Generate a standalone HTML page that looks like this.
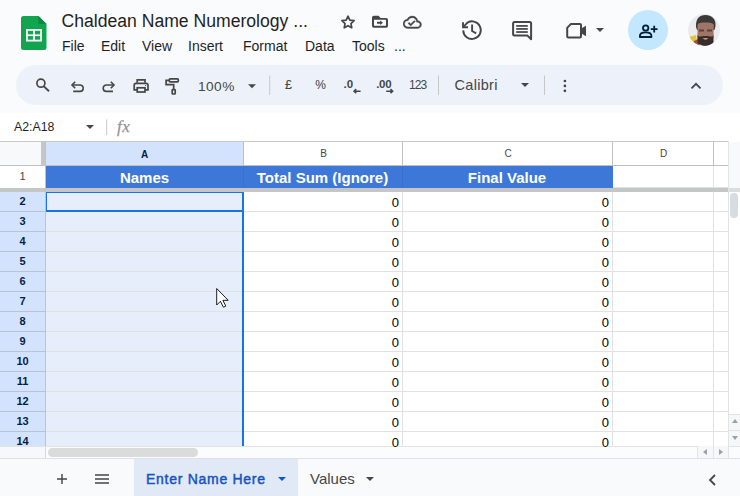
<!DOCTYPE html>
<html><head><meta charset="utf-8">
<style>
*{margin:0;padding:0;box-sizing:border-box}
html,body{width:740px;height:496px;overflow:hidden;background:#f9fbfd;font-family:"Liberation Sans",sans-serif;position:relative}
.a{position:absolute}
.ic{position:absolute;fill:#444746}
.title{left:61.5px;top:11px;font-size:17.6px;color:#1f1f1f;white-space:nowrap}
.menu{top:38px;font-size:14px;color:#1f1f1f;white-space:nowrap}
.pill{left:16px;top:65px;width:707px;height:40px;border-radius:20px;background:#edf2fa}
.sep{position:absolute;width:1px;background:#c7c7c7}
.tb{position:absolute;font-size:14px;color:#444746;white-space:nowrap}
.fbar{left:0;top:113px;width:740px;height:28px;background:#fff}
.grid{left:0;top:141px;width:740px;height:318px;background:#fff;overflow:hidden}
.hl{position:absolute;height:1px;background:#e1e1e1}
.vl{position:absolute;width:1px;background:#e1e1e1}
.ch{position:absolute;font-size:11px;color:#444746;text-align:center}
.rh{position:absolute;left:0;width:45px;font-size:11px;color:#444746;text-align:center;font-weight:bold;background:#d3e3fd}
.num{position:absolute;font-size:13px;color:#000;text-align:right}
</style></head><body>

<!-- logo -->
<svg class="a" style="left:21px;top:16px" width="26" height="34" viewBox="0 0 26 34">
  <path d="M2.5 0H17.5L25.5 8V31.5A2.5 2.5 0 0 1 23 34H2.5A2.5 2.5 0 0 1 0 31.5V2.5A2.5 2.5 0 0 1 2.5 0Z" fill="#12a550"/>
  <path d="M17.5 0L25.5 8L17.5 8Z" fill="#0c8a43"/>
  <rect x="5" y="13" width="16" height="12.5" fill="#fff"/>
  <rect x="6.8" y="14.8" width="5.3" height="3.6" fill="#12a550"/>
  <rect x="13.9" y="14.8" width="5.3" height="3.6" fill="#12a550"/>
  <rect x="6.8" y="20.1" width="5.3" height="3.6" fill="#12a550"/>
  <rect x="13.9" y="20.1" width="5.3" height="3.6" fill="#12a550"/>
</svg>

<div class="a title">Chaldean Name Numerology ...</div>
<div class="a menu" style="left:62px">File</div>
<div class="a menu" style="left:101px">Edit</div>
<div class="a menu" style="left:142px">View</div>
<div class="a menu" style="left:188px">Insert</div>
<div class="a menu" style="left:243px">Format</div>
<div class="a menu" style="left:305px">Data</div>
<div class="a menu" style="left:352px">Tools</div>
<div class="a menu" style="left:394px">...</div>

<!-- star -->
<svg class="a" style="left:0;top:0" width="740" height="40" viewBox="0 0 740 40">
 <path d="M348.00 16.20L349.82 20.09L354.09 20.62L350.95 23.56L351.76 27.78L348.00 25.70L344.24 27.78L345.05 23.56L341.91 20.62L346.18 20.09Z" fill="none" stroke="#444746" stroke-width="1.7" stroke-linejoin="round"/>
 <path d="M373.8 15.8H378.6L380.6 18H386.2A1.8 1.8 0 0 1 388 19.8V25.9A1.8 1.8 0 0 1 386.2 27.7H373.8A1.8 1.8 0 0 1 372 25.9V17.6A1.8 1.8 0 0 1 373.8 15.8Z M374 19.7V25.8H386V19.7Z" fill="#444746" fill-rule="evenodd"/>
 <path d="M377 21.8H380.2V20.6L383 22.8L380.2 25V23.8H377Z" fill="#444746"/>
</svg>
<!-- cloud done -->
<svg class="ic" style="left:403px;top:12.9px" width="18.5" height="18.5" viewBox="0 0 24 24"><path stroke="#444746" stroke-width="0.5" d="M19.35 10.04C18.67 6.59 15.64 4 12 4 9.11 4 6.6 5.64 5.35 8.04 2.34 8.36 0 10.91 0 14c0 3.310 2.69 6 6 6h13c2.76 0 5-2.24 5-5 0-2.64-2.05-4.78-4.650-4.96zM19 18H6c-2.21 0-4-1.79-4-4 0-2.05 1.53-3.76 3.56-3.97l1.07-.11.5-.95C8.08 7.14 9.94 6 12 6c2.62 0 4.880 1.86 5.39 4.43l.3 1.5 1.53.11c1.56.1 2.78 1.41 2.78 2.96 0 1.65-1.35 3-3 3zm-9-3.82l-2.09-2.09L6.5 13.5 10 17l6.01-6.01-1.41-1.41z"/></svg>

<!-- history -->
<svg class="a" style="left:0;top:0" width="740" height="60" viewBox="0 0 740 60">
 <g fill="none" stroke="#444746" stroke-width="1.9">
  <path d="M463.2 30.4A8.8 8.8 0 1 0 466.6 23.2"/>
  <path d="M463 22.2V27.2H468"/>
  <path d="M463.3 26.9L467 23.2"/>
  <path d="M472.1 24.5V31L476.2 33.4"/>
  <!-- comment -->
  <path d="M514.6 22H529.6A1.5 1.5 0 0 1 531.1 23.5V39.2L527.5 35.6H514.6A1.5 1.5 0 0 1 513.1 34.1V23.5A1.5 1.5 0 0 1 514.6 22Z" stroke-width="2" stroke-linejoin="round"/>
  <!-- video -->
  <path d="M571 23.9H580A1 1 0 0 1 581 24.9V36.6A1 1 0 0 1 580 37.6H568.2A1 1 0 0 1 567.2 36.6V27.9Z" stroke-width="2" stroke-linejoin="round"/>
 </g>
 <g fill="#444746">
  <rect x="516.2" y="25.05" width="11.6" height="1.75"/>
  <rect x="516.2" y="28.05" width="11.6" height="1.75"/>
  <rect x="516.2" y="31.15" width="11.6" height="1.75"/>
  <path d="M581.5 28.3L586 25.8V36.3L581.5 33.5Z"/>
  <path d="M596 28h8L600 32z"/>
 </g>
</svg>
<!-- share -->
<div class="a" style="left:627.5px;top:10px;width:40px;height:40px;border-radius:20px;background:#c2e7ff"></div>
<svg class="a" style="left:0;top:0" width="740" height="60" viewBox="0 0 740 60">
 <g fill="none" stroke="#001d35" stroke-width="1.8">
  <circle cx="645.7" cy="28" r="2.7"/>
  <path d="M639.9 37V35.8C639.9 33.6 642.5 32.3 645.7 32.3S651.4 33.6 651.4 35.8V37Z" stroke-linejoin="round"/>
  <path d="M650.8 29.2H657.5M654.2 25.8V32.6"/>
 </g>
</svg>
<!-- avatar -->
<svg class="a" style="left:688px;top:14px" width="32" height="32" viewBox="0 0 32 32">
 <defs><clipPath id="av"><circle cx="16" cy="16" r="16"/></clipPath></defs>
 <g clip-path="url(#av)">
  <rect width="32" height="32" fill="#ebebed"/>
  <path d="M1 23L8 21L9 28L2 29Z" fill="#e3c437"/>
  <path d="M6 27L10 25L12 33H5Z" fill="#a8503f"/>
  <path d="M8 13C7.5 5 11 1 17.5 1S28 5 27.5 12L26.5 16H9Z" fill="#3b3a39"/>
  <path d="M9.5 11C10 9 13 8.5 17.5 8.5S25 9 25.8 11L25.5 22C25 28 22 32 17.5 32S10 28 9.5 22Z" fill="#9e7566"/>
  <path d="M11 15.5H16V17.5H11ZM19 15.5H24V17.5H19Z" fill="#5a4038"/>
  <path d="M9.5 20C10 24 12 22 17.5 22S25 24 25.5 20L25.5 28C24 33 11 33 9.5 28Z" fill="#382d29"/>
  <path d="M14.5 24.5Q17.5 23.5 20.5 24.5Q17.5 26.8 14.5 24.5Z" fill="#cfa596"/>
 </g>
</svg>
<!-- toolbar -->
<div class="a pill"></div>
<svg class="a" style="left:0;top:0" width="740" height="120" viewBox="0 0 740 120">
 <g fill="none" stroke="#444746" stroke-width="1.7">
  <!-- search -->
  <circle cx="40.9" cy="83.2" r="4"/>
  <path d="M43.9 86.4L49 91.3" stroke-width="1.9"/>
  <!-- undo -->
  <g stroke-width="1.6">
  <path d="M72.3 85H80A3.2 3.2 0 0 1 80 91.4H73.2"/>
  <path d="M75.2 81.8L72 85L75.2 88.2"/>
  <!-- redo -->
  <path d="M113.7 85H106.4A3.2 3.2 0 0 0 106.4 91.4H113"/>
  <path d="M110.8 81.8L114 85L110.8 88.2"/>
  </g>
  <!-- print -->
  <path d="M137.2 82.8V79.9H145V82.8"/>
  <path d="M137.2 89.9H134.2V85.2A1.8 1.8 0 0 1 136 83.4H146.2A1.8 1.8 0 0 1 148 85.2V89.9H145"/>
  <rect x="137.2" y="87.8" width="7.8" height="4.2"/>
  <!-- paint format -->
  <rect x="169.3" y="78.9" width="9" height="3" rx="0.8"/>
  <path d="M169.3 80.4H166.1V84.6H173.7V89.5"/>
  <rect x="172.2" y="89.7" width="3" height="4.3" rx="0.6"/>
 </g>
 <circle cx="145.6" cy="85.6" r="0.6" fill="#444746"/>
 <!-- zoom arrow -->
 <path d="M248 84.2h8L252 88.2z" fill="#444746"/>
 <rect x="269.2" y="75.5" width="1" height="19.5" fill="#c7c7c7"/>
 <text x="285" y="89" font-family="Liberation Sans" font-size="12.5" fill="#444746" stroke="#444746" stroke-width="0.1">&#163;</text>
 <text x="315.3" y="89" font-family="Liberation Sans" font-size="12" fill="#444746" stroke="#444746" stroke-width="0.05">%</text>
 <text x="343.6" y="87.5" font-family="Liberation Sans" font-size="11.5" fill="#444746" font-weight="bold">.0</text>
 <text x="376.2" y="87.5" font-family="Liberation Sans" font-size="11.5" fill="#444746" font-weight="bold" letter-spacing="-0.3">.00</text>
 <g fill="none" stroke="#444746" stroke-width="1.6">
  <path d="M354 91.2H360.6M356.2 89.2L354.1 91.2L356.2 93.2"/>
  <path d="M386.2 91.2H392.6M390.5 89.2L392.6 91.2L390.5 93.2"/>
 </g>
 <text x="409" y="89" font-family="Liberation Sans" font-size="12" fill="#444746" letter-spacing="-0.9">123</text>
 <rect x="438" y="75.5" width="1" height="19.5" fill="#c7c7c7"/>
 <path d="M521 83h8L525 87z" fill="#444746"/>
 <rect x="544" y="75.5" width="1" height="19.5" fill="#c7c7c7"/>
 <circle cx="564.9" cy="81" r="1.35" fill="#444746"/>
 <circle cx="564.9" cy="85.9" r="1.35" fill="#444746"/>
 <circle cx="564.9" cy="90.8" r="1.35" fill="#444746"/>
 <path d="M691.5 88.3L696 83.8L700.5 88.3" fill="none" stroke="#444746" stroke-width="1.8"/>
</svg>
<div class="a tb" style="left:198px;top:78.5px;font-size:13.7px;line-height:16px;letter-spacing:0.45px">100%</div>
<div class="a tb" style="left:454.5px;top:77px;font-size:14.5px;line-height:16px;letter-spacing:0.3px">Calibri</div>

<!-- formula bar -->
<div class="a fbar"></div>
<div class="a" style="left:14px;top:119px;font-size:12.3px;line-height:16px;color:#1f1f1f;white-space:nowrap">A2:A18</div>
<svg class="a" style="left:0;top:110px" width="140" height="31" viewBox="0 110 140 31">
 <path d="M86 124.9h8L90 129z" fill="#444746"/>
 <rect x="106.2" y="119.5" width="1" height="15.5" fill="#c7c7c7"/>
 <text x="117" y="132" font-family="Liberation Serif" font-style="italic" font-size="17" fill="#8f9397" stroke="#8f9397" stroke-width="0.25" letter-spacing="0.6">fx</text>
</svg>

<!--GRID-->
<div class="a" style="left:0px;top:141px;width:728px;height:305px;background:#fff;"></div>
<div class="a" style="left:0px;top:141px;width:41px;height:24px;background:#f8f9fa;"></div>
<div class="a" style="left:41px;top:141px;width:5px;height:25px;background:#c4c7c5;"></div>
<div class="a" style="left:46px;top:142px;width:197px;height:23px;background:#d3e3fd;"></div>
<div class="a" style="left:0px;top:141px;width:740px;height:1px;background:#c7c7c7;"></div>
<div class="a" style="left:0px;top:165px;width:728px;height:1px;background:#c0c0c0;"></div>
<div class="a" style="left:46px;top:166px;width:567px;height:22px;background:#3d78d8;"></div>
<div class="a" style="left:243px;top:166px;width:1px;height:22px;background:#3a6fcc;"></div>
<div class="a" style="left:402px;top:166px;width:1px;height:22px;background:#3a6fcc;"></div>
<div class="a" style="left:0px;top:188px;width:740px;height:4px;background:#c4c7c5;"></div>
<div class="a" style="left:0px;top:192px;width:45px;height:254px;background:#d3e3fd;"></div>
<div class="a" style="left:46px;top:192px;width:197px;height:254px;background:#e6eefb;"></div>
<div class="a" style="left:45px;top:141px;width:1px;height:305px;background:#bfc3c8;"></div>
<div class="a" style="left:0px;top:211px;width:45px;height:1px;background:#b9c3d3;"></div>
<div class="a" style="left:46px;top:211px;width:682px;height:1px;background:#e1e1e1;"></div>
<div class="a" style="left:0px;top:231px;width:45px;height:1px;background:#b9c3d3;"></div>
<div class="a" style="left:46px;top:231px;width:682px;height:1px;background:#e1e1e1;"></div>
<div class="a" style="left:0px;top:251px;width:45px;height:1px;background:#b9c3d3;"></div>
<div class="a" style="left:46px;top:251px;width:682px;height:1px;background:#e1e1e1;"></div>
<div class="a" style="left:0px;top:271px;width:45px;height:1px;background:#b9c3d3;"></div>
<div class="a" style="left:46px;top:271px;width:682px;height:1px;background:#e1e1e1;"></div>
<div class="a" style="left:0px;top:291px;width:45px;height:1px;background:#b9c3d3;"></div>
<div class="a" style="left:46px;top:291px;width:682px;height:1px;background:#e1e1e1;"></div>
<div class="a" style="left:0px;top:311px;width:45px;height:1px;background:#b9c3d3;"></div>
<div class="a" style="left:46px;top:311px;width:682px;height:1px;background:#e1e1e1;"></div>
<div class="a" style="left:0px;top:331px;width:45px;height:1px;background:#b9c3d3;"></div>
<div class="a" style="left:46px;top:331px;width:682px;height:1px;background:#e1e1e1;"></div>
<div class="a" style="left:0px;top:351px;width:45px;height:1px;background:#b9c3d3;"></div>
<div class="a" style="left:46px;top:351px;width:682px;height:1px;background:#e1e1e1;"></div>
<div class="a" style="left:0px;top:371px;width:45px;height:1px;background:#b9c3d3;"></div>
<div class="a" style="left:46px;top:371px;width:682px;height:1px;background:#e1e1e1;"></div>
<div class="a" style="left:0px;top:391px;width:45px;height:1px;background:#b9c3d3;"></div>
<div class="a" style="left:46px;top:391px;width:682px;height:1px;background:#e1e1e1;"></div>
<div class="a" style="left:0px;top:411px;width:45px;height:1px;background:#b9c3d3;"></div>
<div class="a" style="left:46px;top:411px;width:682px;height:1px;background:#e1e1e1;"></div>
<div class="a" style="left:0px;top:431px;width:45px;height:1px;background:#b9c3d3;"></div>
<div class="a" style="left:46px;top:431px;width:682px;height:1px;background:#e1e1e1;"></div>
<div class="a" style="left:0px;top:451px;width:45px;height:1px;background:#b9c3d3;"></div>
<div class="a" style="left:46px;top:451px;width:682px;height:1px;background:#e1e1e1;"></div>
<div class="a" style="left:243px;top:142px;width:1px;height:23px;background:#c0c0c0;"></div>
<div class="a" style="left:243px;top:192px;width:1px;height:254px;background:#e1e1e1;"></div>
<div class="a" style="left:402px;top:142px;width:1px;height:23px;background:#c0c0c0;"></div>
<div class="a" style="left:402px;top:192px;width:1px;height:254px;background:#e1e1e1;"></div>
<div class="a" style="left:612px;top:142px;width:1px;height:23px;background:#c0c0c0;"></div>
<div class="a" style="left:612px;top:192px;width:1px;height:254px;background:#e1e1e1;"></div>
<div class="a" style="left:713px;top:142px;width:1px;height:23px;background:#c0c0c0;"></div>
<div class="a" style="left:713px;top:166px;width:1px;height:22px;background:#e1e1e1;"></div>
<div class="a" style="left:713px;top:192px;width:1px;height:254px;background:#e1e1e1;"></div>
<div class="a" style="left:613px;top:187px;width:115px;height:1px;background:#e1e1e1;"></div>
<div class="a" style="left:728px;top:141px;width:12px;height:305px;background:#fff;"></div>
<div class="a" style="left:728px;top:142px;width:12px;height:46px;background:#f8f9fc;"></div>
<div class="a" style="left:728px;top:188px;width:12px;height:4px;background:#dcdcdc;"></div>
<div class="a" style="left:728px;top:141px;width:1px;height:318px;background:#e3e3e3;"></div>
<div class="a" style="left:730px;top:193px;width:8px;height:25px;background:#d7dbe2;border-radius:4px"></div>
<div class="a" style="left:729px;top:414px;width:11px;height:32px;background:#f6f7f8;"></div>
<div class="a" style="left:729px;top:414px;width:11px;height:1px;background:#e3e3e3;"></div>
<div class="a" style="left:729px;top:430px;width:11px;height:1px;background:#e3e3e3;"></div>
<svg class="a" style="left:732px;top:419px" width="6" height="4" viewBox="0 0 6 4"><path d="M0 4L3 0L6 4z" fill="#9aa0a6"/></svg>
<svg class="a" style="left:732px;top:436px" width="6" height="4" viewBox="0 0 6 4"><path d="M0 0L3 4L6 0z" fill="#9aa0a6"/></svg>
<div class="a" style="left:0px;top:446px;width:740px;height:13px;background:#fbfcfd;"></div>
<div class="a" style="left:0px;top:446px;width:45px;height:13px;background:#f6f8fc;"></div>
<div class="a" style="left:45px;top:446px;width:1px;height:13px;background:#d8d8d8;"></div>
<div class="a" style="left:0px;top:446px;width:740px;height:1px;background:#e3e3e3;"></div>
<div class="a" style="left:0px;top:458px;width:740px;height:1px;background:#dfe1e5;"></div>
<div class="a" style="left:48px;top:448px;width:150px;height:9px;background:#dadcdb;border-radius:4.5px"></div>
<div class="a" style="left:697px;top:446px;width:31px;height:12px;background:#f6f7f8;"></div>
<div class="a" style="left:697px;top:446px;width:1px;height:12px;background:#e3e3e3;"></div>
<div class="a" style="left:713px;top:446px;width:1px;height:12px;background:#e3e3e3;"></div>
<div class="a" style="left:728px;top:446px;width:1px;height:12px;background:#e3e3e3;"></div>
<svg class="a" style="left:703px;top:449px" width="4" height="6" viewBox="0 0 4 6"><path d="M4 0L0 3L4 6z" fill="#9aa0a6"/></svg>
<svg class="a" style="left:719px;top:449px" width="4" height="6" viewBox="0 0 4 6"><path d="M0 0L4 3L0 6z" fill="#9aa0a6"/></svg>
<div class="a" style="left:0px;top:459px;width:740px;height:37px;background:#f9fafc;"></div>
<div class="a" style="left:134px;top:459px;width:164px;height:37px;background:#e1e9f7;"></div>
<svg class="a" style="left:56px;top:473px" width="12" height="12" viewBox="0 0 12 12"><path d="M6 1v10M1 6h10" stroke="#444746" stroke-width="1.45" fill="none"/></svg>
<svg class="a" style="left:94px;top:473px" width="16" height="12" viewBox="0 0 16 12"><path d="M1 2h14M1 6h14M1 10h14" stroke="#444746" stroke-width="1.45" fill="none"/></svg>
<div class="a" style="left:146px;top:469px;width:140px;height:20px;font-size:14px;letter-spacing:0.72px;color:#1553c4;-webkit-text-stroke:0.45px #1553c4;line-height:20px;white-space:nowrap">Enter Name Here</div>
<svg class="a" style="left:278px;top:477px" width="8" height="4" viewBox="0 0 8 4"><path d="M0 0h8L4 4z" fill="#0b57d0"/></svg>
<div class="a" style="left:310px;top:469px;width:60px;height:20px;font-size:15px;color:#444746;line-height:20px;white-space:nowrap">Values</div>
<svg class="a" style="left:366px;top:477px" width="8" height="4" viewBox="0 0 8 4"><path d="M0 0h8L4 4z" fill="#444746"/></svg>
<svg class="a" style="left:707px;top:474px" width="10" height="12" viewBox="0 0 10 12"><path d="M8 1L3 6L8 11" stroke="#444746" stroke-width="1.8" fill="none"/></svg>
<div class="a" style="left:242px;top:192px;width:2px;height:254px;background:#1a73e8;"></div>
<div class="a" style="left:46px;top:192px;width:197px;height:1px;background:#1a73e8;"></div>
<div class="a" style="left:46px;top:192px;width:1px;height:19px;background:#1a73e8;"></div>
<div class="a" style="left:46px;top:210px;width:197px;height:2px;background:#1a73e8;"></div>
<div class="a" style="left:46px;top:142px;width:197px;height:24px;font-size:10px;color:#444746;text-align:center;line-height:25px;font-weight:bold;color:#041e49">A</div>
<div class="a" style="left:244px;top:141px;width:159px;height:24px;font-size:10px;color:#444746;text-align:center;line-height:25px">B</div>
<div class="a" style="left:403px;top:141px;width:210px;height:24px;font-size:10px;color:#444746;text-align:center;line-height:25px">C</div>
<div class="a" style="left:613px;top:141px;width:101px;height:24px;font-size:10px;color:#444746;text-align:center;line-height:25px">D</div>
<div class="a" style="left:0px;top:166px;width:45px;height:21px;font-size:11px;color:#444746;text-align:center;line-height:21px">1</div>
<div class="a" style="left:46px;top:166px;width:197px;height:21px;font-size:15px;font-weight:bold;color:#fff;text-align:center;line-height:24px">Names</div>
<div class="a" style="left:243px;top:166px;width:159px;height:21px;font-size:15px;font-weight:bold;color:#fff;text-align:center;line-height:24px">Total Sum (Ignore)</div>
<div class="a" style="left:402px;top:166px;width:210px;height:21px;font-size:15px;font-weight:bold;color:#fff;text-align:center;line-height:24px">Final Value</div>
<div class="a" style="left:0px;top:191px;width:45px;height:20px;font-size:11px;font-weight:bold;color:#041e49;text-align:center;line-height:21px">2</div>
<div class="a" style="left:243px;top:192px;width:156px;height:20px;font-size:13px;color:#000;text-align:right;line-height:21px">0</div>
<div class="a" style="left:402px;top:192px;width:207px;height:20px;font-size:13px;color:#000;text-align:right;line-height:21px">0</div>
<div class="a" style="left:0px;top:211px;width:45px;height:20px;font-size:11px;font-weight:bold;color:#041e49;text-align:center;line-height:21px">3</div>
<div class="a" style="left:243px;top:212px;width:156px;height:20px;font-size:13px;color:#000;text-align:right;line-height:21px">0</div>
<div class="a" style="left:402px;top:212px;width:207px;height:20px;font-size:13px;color:#000;text-align:right;line-height:21px">0</div>
<div class="a" style="left:0px;top:231px;width:45px;height:20px;font-size:11px;font-weight:bold;color:#041e49;text-align:center;line-height:21px">4</div>
<div class="a" style="left:243px;top:232px;width:156px;height:20px;font-size:13px;color:#000;text-align:right;line-height:21px">0</div>
<div class="a" style="left:402px;top:232px;width:207px;height:20px;font-size:13px;color:#000;text-align:right;line-height:21px">0</div>
<div class="a" style="left:0px;top:251px;width:45px;height:20px;font-size:11px;font-weight:bold;color:#041e49;text-align:center;line-height:21px">5</div>
<div class="a" style="left:243px;top:252px;width:156px;height:20px;font-size:13px;color:#000;text-align:right;line-height:21px">0</div>
<div class="a" style="left:402px;top:252px;width:207px;height:20px;font-size:13px;color:#000;text-align:right;line-height:21px">0</div>
<div class="a" style="left:0px;top:271px;width:45px;height:20px;font-size:11px;font-weight:bold;color:#041e49;text-align:center;line-height:21px">6</div>
<div class="a" style="left:243px;top:272px;width:156px;height:20px;font-size:13px;color:#000;text-align:right;line-height:21px">0</div>
<div class="a" style="left:402px;top:272px;width:207px;height:20px;font-size:13px;color:#000;text-align:right;line-height:21px">0</div>
<div class="a" style="left:0px;top:291px;width:45px;height:20px;font-size:11px;font-weight:bold;color:#041e49;text-align:center;line-height:21px">7</div>
<div class="a" style="left:243px;top:292px;width:156px;height:20px;font-size:13px;color:#000;text-align:right;line-height:21px">0</div>
<div class="a" style="left:402px;top:292px;width:207px;height:20px;font-size:13px;color:#000;text-align:right;line-height:21px">0</div>
<div class="a" style="left:0px;top:311px;width:45px;height:20px;font-size:11px;font-weight:bold;color:#041e49;text-align:center;line-height:21px">8</div>
<div class="a" style="left:243px;top:312px;width:156px;height:20px;font-size:13px;color:#000;text-align:right;line-height:21px">0</div>
<div class="a" style="left:402px;top:312px;width:207px;height:20px;font-size:13px;color:#000;text-align:right;line-height:21px">0</div>
<div class="a" style="left:0px;top:331px;width:45px;height:20px;font-size:11px;font-weight:bold;color:#041e49;text-align:center;line-height:21px">9</div>
<div class="a" style="left:243px;top:332px;width:156px;height:20px;font-size:13px;color:#000;text-align:right;line-height:21px">0</div>
<div class="a" style="left:402px;top:332px;width:207px;height:20px;font-size:13px;color:#000;text-align:right;line-height:21px">0</div>
<div class="a" style="left:0px;top:351px;width:45px;height:20px;font-size:11px;font-weight:bold;color:#041e49;text-align:center;line-height:21px">10</div>
<div class="a" style="left:243px;top:352px;width:156px;height:20px;font-size:13px;color:#000;text-align:right;line-height:21px">0</div>
<div class="a" style="left:402px;top:352px;width:207px;height:20px;font-size:13px;color:#000;text-align:right;line-height:21px">0</div>
<div class="a" style="left:0px;top:371px;width:45px;height:20px;font-size:11px;font-weight:bold;color:#041e49;text-align:center;line-height:21px">11</div>
<div class="a" style="left:243px;top:372px;width:156px;height:20px;font-size:13px;color:#000;text-align:right;line-height:21px">0</div>
<div class="a" style="left:402px;top:372px;width:207px;height:20px;font-size:13px;color:#000;text-align:right;line-height:21px">0</div>
<div class="a" style="left:0px;top:391px;width:45px;height:20px;font-size:11px;font-weight:bold;color:#041e49;text-align:center;line-height:21px">12</div>
<div class="a" style="left:243px;top:392px;width:156px;height:20px;font-size:13px;color:#000;text-align:right;line-height:21px">0</div>
<div class="a" style="left:402px;top:392px;width:207px;height:20px;font-size:13px;color:#000;text-align:right;line-height:21px">0</div>
<div class="a" style="left:0px;top:411px;width:45px;height:20px;font-size:11px;font-weight:bold;color:#041e49;text-align:center;line-height:21px">13</div>
<div class="a" style="left:243px;top:412px;width:156px;height:20px;font-size:13px;color:#000;text-align:right;line-height:21px">0</div>
<div class="a" style="left:402px;top:412px;width:207px;height:20px;font-size:13px;color:#000;text-align:right;line-height:21px">0</div>
<div class="a" style="left:0px;top:431px;width:45px;height:20px;font-size:11px;font-weight:bold;color:#041e49;text-align:center;line-height:21px">14</div>
<div class="a" style="left:243px;top:432px;width:156px;height:20px;font-size:13px;color:#000;text-align:right;line-height:21px">0</div>
<div class="a" style="left:402px;top:432px;width:207px;height:20px;font-size:13px;color:#000;text-align:right;line-height:21px">0</div>
<!--/GRID-->
<!-- cursor -->
<svg class="a" style="left:212px;top:284px" width="22" height="28" viewBox="212 284 22 28">
 <path d="M216.7 288.5V305L220.4 301.3L223.4 307.2L225.8 306.1L222.9 300.3H228.2Z" fill="#fff" stroke="#111" stroke-width="0.95" stroke-linejoin="round"/>
</svg>

<!-- sheet tabs -->
</body></html>
